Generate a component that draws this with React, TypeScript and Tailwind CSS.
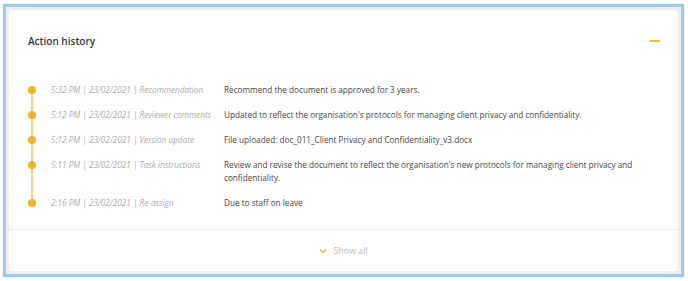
import React from "react";

const rows = [
  { time: "5:32 PM", date: "23/02/2021", type: "Recommendation", text: "Recommend the document is approved for 3 years." },
  { time: "5:12 PM", date: "23/02/2021", type: "Reviewer comments", text: "Updated to reflect the organisation's protocols for managing client privacy and confidentiality." },
  { time: "5:12 PM", date: "23/02/2021", type: "Version update", text: "File uploaded: doc_011_Client Privacy and Confidentiality_v3.docx" },
  { time: "5:11 PM", date: "23/02/2021", type: "Task instructions", text: "Review and revise the document to reflect the organisation's new protocols for managing client privacy and confidentiality." },
  { time: "2:16 PM", date: "23/02/2021", type: "Re-assign", text: "Due to staff on leave" },
];

export default function App() {
  return (
    <div className="w-[688px] h-[281px] bg-white pt-[4px] pl-[3px]" style={{ fontFamily: '"Open Sans", sans-serif' }}>
      <div className="w-[681px] h-[273px] border-[3px] border-[#a3c8e4] bg-[#eeeeee] p-[3px] shadow-[0_0_2px_#c5dcef]">
        <div className="w-full h-full bg-white rounded-[3px] flex flex-col">
          <div className="h-[62px] flex items-center justify-between pl-[19px] pr-[18px] shrink-0">
            <span className="text-[10px] font-semibold text-[#35354a] leading-none">Action history</span>
            <span className="block w-[10px] h-[2px] bg-[#f6b835]"></span>
          </div>
          <div className="pl-[19px] pt-[11px] pb-[20px] pr-[30px]">
            <div className="relative flex flex-col gap-[12px]">
              <div className="absolute left-[3px] w-[2px] top-[6px] bottom-[6px] bg-[#f8d37c]"></div>
              {rows.map((r, i) => (
                <div key={i} className="flex items-start text-[8.2px] leading-[13px]">
                  <div className="w-[8px] h-[8px] rounded-full bg-[#f4b32c] mt-[2.5px] shrink-0 relative"></div>
                  <div className="w-[188px] pl-[15px] shrink-0 italic text-[#adadad] whitespace-nowrap">
                    {r.time} | {r.date} | {r.type}
                  </div>
                  <div className="text-[#474747]">{r.text}</div>
                </div>
              ))}
            </div>
          </div>
          <div className="border-t border-[#ececec] flex-1 flex items-center justify-center gap-[6px]">
            <svg width="8" height="6" viewBox="0 0 8 6" fill="none">
              <path d="M1 1.5 L4 4.5 L7 1.5" stroke="#f4b32c" strokeWidth="1.5" />
            </svg>
            <span className="text-[9px] text-[#bcbcbc]">Show all</span>
          </div>
        </div>
      </div>
    </div>
  );
}
